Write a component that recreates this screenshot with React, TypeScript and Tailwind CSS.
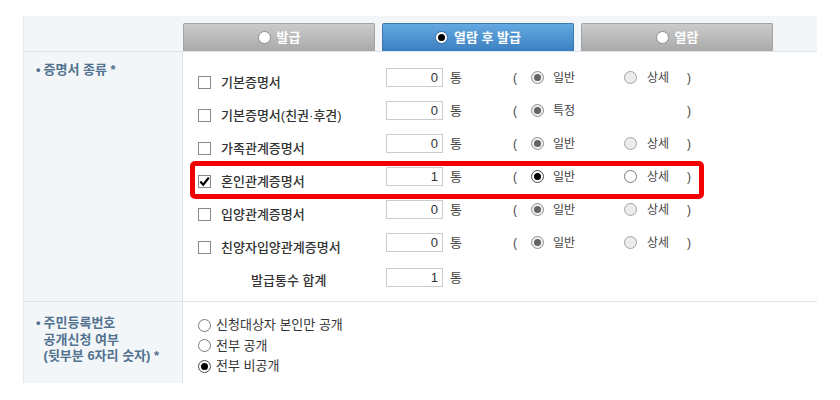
const font = "font-['Liberation_Sans','Noto_Sans_CJK_KR',sans-serif]";

type RadioKind = 'grayOn' | 'grayOff' | 'on' | 'off' | 'tabOn' | 'tabOff';

function Radio({ kind }: { kind: RadioKind }) {
  const ring: Record<RadioKind, string> = {
    grayOn: 'border-[#8e8e8e] bg-[#efefef]',
    grayOff: 'border-[#a2a2a2] bg-[#ececec]',
    on: 'border-[#4a4a4a] bg-white',
    off: 'border-[#7a7a7a] bg-white',
    tabOn: 'border-[#2f6aa3] bg-white',
    tabOff: 'border-[#8f8f8f] bg-white',
  };
  const dot: Record<RadioKind, string> = {
    grayOn: 'bg-[#636363]',
    grayOff: '',
    on: 'bg-black',
    off: '',
    tabOn: 'bg-black',
    tabOff: '',
  };
  return (
    <span className={`flex h-[13px] w-[13px] shrink-0 items-center justify-center rounded-full border ${ring[kind]}`}>
      {dot[kind] && <span className={`h-[7px] w-[7px] rounded-full ${dot[kind]}`} />}
    </span>
  );
}

function Checkbox({ checked }: { checked?: boolean }) {
  return (
    <span className="relative flex h-[13px] w-[13px] shrink-0 items-center justify-center border border-[#8a8a8a] bg-white">
      {checked && (
        <svg width="11" height="11" viewBox="0 0 11 11" className="absolute">
          <path d="M1.3 5.6 L4.2 8.7 L9.8 1.6" fill="none" stroke="#000" strokeWidth="2.2" />
        </svg>
      )}
    </span>
  );
}

function Tab({ label, active }: { label: string; active?: boolean }) {
  return (
    <div
      className={`flex h-[28px] w-[192px] items-center justify-center gap-[6px] rounded-t-[2px] border border-b-0 text-[13px] font-bold text-white ${
        active
          ? 'border-[#3b78b4] bg-gradient-to-b from-[#63a8e0] to-[#3d80c2]'
          : 'border-[#a3a3a3] bg-gradient-to-b from-[#cbcbcb] to-[#a9a9a9]'
      }`}
    >
      <Radio kind={active ? 'tabOn' : 'tabOff'} />
      <span>{label}</span>
    </div>
  );
}

type Row = { name: string; count: string; checked?: boolean; special?: boolean };

const rows: Row[] = [
  { name: '기본증명서', count: '0' },
  { name: '기본증명서(친권·후견)', count: '0', special: true },
  { name: '가족관계증명서', count: '0' },
  { name: '혼인관계증명서', count: '1', checked: true },
  { name: '입양관계증명서', count: '0' },
  { name: '친양자입양관계증명서', count: '0' },
];

function CountBox({ value }: { value: string }) {
  return (
    <span className="flex h-[19px] w-[57px] items-center justify-end border border-[#cccccc] bg-white pr-[4px] text-[13px] text-[#333]">
      {value}
    </span>
  );
}

function CertRow({ row }: { row: Row }) {
  return (
    <div className="flex h-[33px] items-center">
      <div className="flex w-[203px] items-center pl-[15px]">
        <Checkbox checked={row.checked} />
        <span className="ml-[10px] text-[13px] font-medium text-[#333]">{row.name}</span>
      </div>
      <div className="mb-[10px] flex items-center text-[12px] text-[#444]">
        <CountBox value={row.count} />
        <span className="ml-[7px] w-[63px] text-[13px]">통</span>
        <span className="w-[18px]">(</span>
        <Radio kind={row.checked ? 'on' : 'grayOn'} />
        <span className="ml-[9px] w-[71px]">{row.special ? '특정' : '일반'}</span>
        {row.special ? (
          <span className="w-[63px]" />
        ) : (
          <>
            <Radio kind={row.checked ? 'off' : 'grayOff'} />
            <span className="ml-[10px] w-[40px]">상세</span>
          </>
        )}
        <span>)</span>
      </div>
    </div>
  );
}

export default function App() {
  return (
    <div className={`h-[400px] w-[840px] bg-white pl-[23px] pt-[16px] ${font}`}>
      <div className="w-[794px] border-l border-[#e4e8ed]">
        {/* tab header */}
        <div className="flex h-[36px] items-end gap-[7px] border-b border-[#dde3ea] bg-[#f3f6f9] pl-[159px]">
          <Tab label="발급" />
          <Tab label="열람 후 발급" active />
          <Tab label="열람" />
        </div>

        {/* 증명서 종류 */}
        <div className="flex h-[250px] border-b border-[#dde3ea]">
          <div className="w-[159px] shrink-0 border-r border-[#dde3ea] bg-[#f3f6f9] pl-[12px] pt-[10px] text-[13px] font-bold leading-[16px] text-[#52728f]">
            <span className="mr-[3px]">•</span>증명서 종류 *
          </div>
          <div className="relative flex-1 pt-[14px]">
            {rows.map((r) => (
              <CertRow key={r.name} row={r} />
            ))}
            <div className="flex h-[33px] items-center">
              <span className="w-[203px] pl-[68px] text-[13px] font-medium text-[#333]">발급통수 합계</span>
              <div className="mb-[6px] flex items-center text-[13px] text-[#444]">
                <CountBox value="1" />
                <span className="ml-[7px]">통</span>
              </div>
            </div>
            <div className="absolute left-[7px] top-[109px] h-[38px] w-[514px] rounded-[5px] border-[5px] border-[#f20000]" />
          </div>
        </div>

        {/* 주민등록번호 공개 */}
        <div className="flex h-[81px]">
          <div className="flex w-[159px] shrink-0 border-r border-[#dde3ea] bg-[#f3f6f9] pl-[12px] pt-[13px] text-[13px] font-bold leading-[16.5px] text-[#52728f]">
            <span className="mr-[3px]">•</span>
            <div>
              주민등록번호
              <br />
              공개신청 여부
              <br />
              (뒷부분 6자리 숫자) *
            </div>
          </div>
          <div className="flex flex-col pl-[15px] pt-[13px] text-[13px] leading-[20.5px] text-[#333]">
            {[
              { t: '신청대상자 본인만 공개', on: false },
              { t: '전부 공개', on: false },
              { t: '전부 비공개', on: true },
            ].map((o) => (
              <div key={o.t} className="flex items-center gap-[5px]">
                <Radio kind={o.on ? 'on' : 'off'} />
                <span>{o.t}</span>
              </div>
            ))}
          </div>
        </div>
      </div>
    </div>
  );
}
